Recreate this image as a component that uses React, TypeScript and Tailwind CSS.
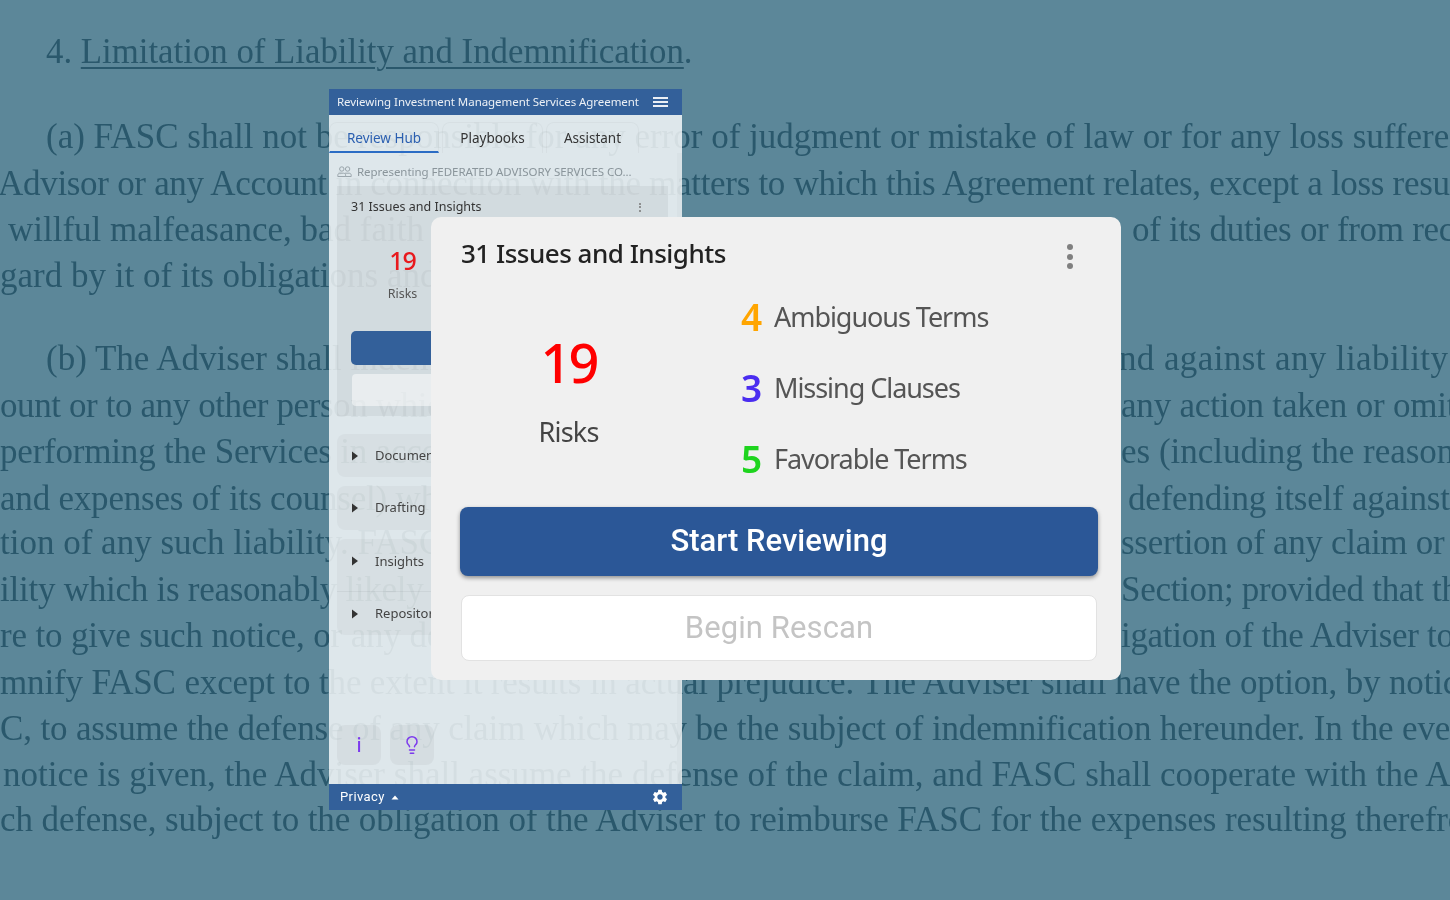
import { Lightbulb } from "lucide-react";
import { MdSettings } from "react-icons/md";

const Caret = () => (
  <svg width="8" height="10" viewBox="0 0 8 10" className="shrink-0 fill-[#333]">
    <path d="M1 0.5 L7 5 L1 9.5 Z" />
  </svg>
);

const People = () => (
  <svg width="15" height="12" viewBox="0 0 15 12" fill="none" className="shrink-0 stroke-[#9aa5ab]">
    <circle cx="4.8" cy="3" r="2.2" />
    <circle cx="10.6" cy="3" r="2.2" />
    <path d="M0.8 10.5v-1.3c0-1.2 1-2 2-2h3.8c1.1 0 2 .8 2 2v1.3z" />
    <path d="M8 7.2h4.2c1.1 0 2 .8 2 2v1.3h-5.8" />
  </svg>
);

const Kebab = ({ big }: { big?: boolean }) =>
  big ? (
    <div className="flex flex-col gap-[3.5px]">
      <span className="size-[6px] rounded-full bg-[#808080]" />
      <span className="size-[6px] rounded-full bg-[#808080]" />
      <span className="size-[6px] rounded-full bg-[#808080]" />
    </div>
  ) : (
    <div className="flex flex-col gap-[1.5px]">
      <span className="size-[2px] rounded-full bg-[#777]" />
      <span className="size-[2px] rounded-full bg-[#777]" />
      <span className="size-[2px] rounded-full bg-[#777]" />
    </div>
  );

const Document = () => (
  <div className="h-full overflow-hidden bg-[#5c8799] pt-[29px] font-['Liberation_Serif',serif] text-[35px] leading-[46.3px] whitespace-nowrap text-[#2a586c]">
    <div className="ml-[46px] h-[46px] text-[34.8px]">
      4. <span className="underline decoration-[2px] underline-offset-[4px]">Limitation of Liability and Indemnification</span>.
    </div>
    <div className="ml-[46px] mt-[39px] h-[46.3px]">(a) FASC shall not be responsible for any error of judgment or mistake of law or for any loss suffered</div>
    <div className="ml-[-2px] h-[46.3px] pt-px tracking-[-0.3px]">Advisor or any Account in connection with the matters to which this Agreement relates, except a loss resulting</div>
    <div className="flex h-[46.3px]">
      <span className="ml-[8px] w-[692px] shrink-0">willful malfeasance, bad faith or gross</span>
      <span className="ml-[432px] shrink-0 tracking-[-0.3px]">of its duties or from reckless</span>
    </div>
    <div className="h-[46.3px]">gard by it of its obligations and duties</div>
    <div className="mt-[37px] flex h-[46.3px]">
      <span className="ml-[46px] w-[654px] shrink-0">(b) The Adviser shall indemnify and</span>
      <span className="ml-[403px] shrink-0 tracking-[0.4px]">and against any liability</span>
    </div>
    <div className="flex h-[46.3px] pt-px">
      <span className="w-[700px] shrink-0 tracking-[-0.4px]">ount or to any other person which</span>
      <span className="ml-[421px] shrink-0 tracking-[-0.2px]">any action taken or omitted</span>
    </div>
    <div className="flex h-[46.3px]">
      <span className="w-[700px] shrink-0 tracking-[-0.2px]">performing the Services in accordance</span>
      <span className="ml-[421px] shrink-0">es (including the reasonable</span>
    </div>
    <div className="flex h-[45.3px] pt-px">
      <span className="w-[700px] shrink-0 tracking-[-0.2px]">and expenses of its counsel) which</span>
      <span className="ml-[428px] shrink-0 tracking-[-0.2px]">defending itself against</span>
    </div>
    <div className="flex h-[45.3px]">
      <span className="w-[700px] shrink-0">tion of any such liability. FASC shall</span>
      <span className="ml-[421px] shrink-0 tracking-[-0.3px]">ssertion of any claim or</span>
    </div>
    <div className="flex h-[46.3px] pt-px">
      <span className="w-[700px] shrink-0 tracking-[-0.25px]">ility which is reasonably likely to</span>
      <span className="ml-[421px] shrink-0 tracking-[-0.3px]">Section; provided that the</span>
    </div>
    <div className="flex h-[46.3px] pt-px">
      <span className="w-[700px] shrink-0 tracking-[-0.15px]">re to give such notice, or any delay</span>
      <span className="ml-[421px] shrink-0 tracking-[-0.3px]">igation of the Adviser to</span>
    </div>
    <div className="h-[46.3px] pt-[2px] tracking-[-0.15px]">mnify FASC except to the extent it results in actual prejudice. The Adviser shall have the option, by notice</div>
    <div className="h-[46.3px] pt-px tracking-[-0.15px]">C, to assume the defense of any claim which may be the subject of indemnification hereunder. In the event</div>
    <div className="ml-[3px] h-[46.3px] pt-px">notice is given, the Adviser shall assume the defense of the claim, and FASC shall cooperate with the Adviser</div>
    <div className="h-[46.3px] tracking-[-0.1px]">ch defense, subject to the obligation of the Adviser to reimburse FASC for the expenses resulting therefrom</div>
  </div>
);

const Panel = () => (
  <div className="absolute left-[329px] top-[89px] flex h-[721px] w-[353px] flex-col bg-white/80 font-['Noto_Sans',sans-serif]">
    <div className="flex h-[26px] shrink-0 items-center justify-between bg-[#33609a] pl-[8px] pr-[14px] text-[11.5px] tracking-[-0.06px] text-white/90">
      <span>Reviewing Investment Management Services Agreement</span>
      <div className="flex flex-col gap-[2.5px]">
        <span className="h-[1.5px] w-[15px] bg-white/90" />
        <span className="h-[1.5px] w-[15px] bg-white/90" />
        <span className="h-[1.5px] w-[15px] bg-white/90" />
      </div>
    </div>
    <div className="flex h-[38px] shrink-0 items-end gap-[3px] text-[13.5px] text-[#333]">
      <div className="flex h-[31px] w-[110px] items-center justify-center rounded-t-lg border border-b-2 border-black/[0.03] border-b-[#2b6cc4] pt-[3px] text-[#2b5fb0]">Review Hub</div>
      <div className="flex h-[31px] w-[101px] items-center justify-center rounded-t-lg border border-b-0 border-black/[0.03] pt-px">Playbooks</div>
      <div className="flex h-[31px] w-[93px] items-center justify-center rounded-t-lg border border-b-0 border-black/[0.03] pt-px">Assistant</div>
    </div>
    <div className="relative flex flex-1 flex-col px-[8px]">
      <div className="absolute inset-y-0 right-0 w-[5px] bg-black/[0.02]" />
      <div className="flex h-[33px] shrink-0 items-center gap-[5px] pt-[4px] text-[11.5px] tracking-[-0.05px] text-[#8a959b]">
        <People />
        <span>Representing FEDERATED ADVISORY SERVICES CO...</span>
      </div>
      <div className="flex h-[230px] w-[331px] shrink-0 flex-col bg-black/5 px-[14px]">
        <div className="flex h-[41px] shrink-0 items-center justify-between pr-[13px] pt-px text-[12.5px] text-[#333]">
          <span>31 Issues and Insights</span>
          <Kebab />
        </div>
        <div className="flex w-[103px] flex-col items-center pt-[16px]">
          <span className="text-[25px] leading-[34px] font-medium tracking-[-1px] text-[#e8191d]">19</span>
          <span className="mt-[8px] text-[12.5px] text-[#555]">Risks</span>
        </div>
        <div className="mt-auto mb-[10px] flex flex-col gap-[9px]">
          <div className="h-[34px] rounded-[5px] bg-[#33609a]" />
          <div className="ml-px h-[32px] rounded-[4px] bg-white/50" />
        </div>
      </div>
      <div className="mt-[18px] flex flex-col">
        <div className="flex h-[43px] items-center gap-[16px] rounded-lg bg-black/[0.03] pl-[14px] text-[13px] text-[#444]">
          <Caret />
          Documents
        </div>
        <div className="mt-[9px] flex h-[44px] items-center gap-[16px] rounded-lg bg-black/[0.03] pl-[14px] text-[13px] text-[#444]">
          <Caret />
          Drafting
        </div>
        <div className="mt-[9px] flex h-[53px] items-start gap-[16px] rounded-t-lg border-b border-black/5 bg-black/[0.03] pl-[14px] pt-[13px] text-[13px] text-[#444]">
          <span className="mt-[4px]">
            <Caret />
          </span>
          Insights
        </div>
        <div className="flex h-[43px] items-center gap-[16px] rounded-b-lg bg-black/[0.03] pl-[14px] text-[13px] text-[#444]">
          <Caret />
          Repository
        </div>
      </div>
      <div className="mt-auto mb-[19px] flex gap-[9px]">
        <div className="flex h-[40px] w-[44px] items-center justify-center rounded-lg bg-black/[0.04] text-[19px] font-medium text-[#7c3aed]">i</div>
        <div className="flex h-[40px] w-[44px] items-center justify-center rounded-lg bg-black/[0.04] text-[#7c3aed]">
          <Lightbulb size={20} strokeWidth={1.8} />
        </div>
      </div>
    </div>
    <div className="flex h-[26px] shrink-0 items-center justify-between bg-[#33609a] pl-[11px] pr-[13px] font-['Roboto',sans-serif] text-[13px] tracking-[0.4px] text-white">
      <div className="flex items-center gap-[6px]">
        Privacy
        <svg width="8" height="5" viewBox="0 0 8 5" className="fill-white">
          <path d="M4 0.5 L7.5 4.5 L0.5 4.5 Z" />
        </svg>
      </div>
      <MdSettings size={18} />
    </div>
  </div>
);

const stats = [
  { n: "4", label: "Ambiguous Terms", color: "text-[#ffa500]" },
  { n: "3", label: "Missing Clauses", color: "text-[#4a2df0]" },
  { n: "5", label: "Favorable Terms", color: "text-[#1ed41e]" },
];

const Modal = () => (
  <div className="absolute left-[431px] top-[217px] flex h-[463px] w-[690px] flex-col rounded-[10px] bg-[#f0f0f0] px-[29px] font-['Noto_Sans',sans-serif]">
    <div className="flex h-[72px] shrink-0 items-center justify-between pl-px pr-[19px]">
      <span className="text-[26px] font-medium tracking-[-0.5px] text-[#222]">31 Issues and Insights</span>
      <span className="mt-[7px]">
        <Kebab big />
      </span>
    </div>
    <div className="flex h-[218px] shrink-0">
      <div className="flex w-[217px] flex-col items-center pt-[38px]">
        <span className="text-[54px] leading-[70px] font-medium tracking-[-3px] text-[#ff0000]">19</span>
        <span className="mt-[15px] text-[27px] tracking-[-0.8px] text-[#444]">Risks</span>
      </div>
      <div className="ml-[64px] flex flex-col gap-[25px] pt-[5px]">
        {stats.map((s) => (
          <div key={s.n} className="flex h-[46px] items-center gap-[11px]">
            <span className={`w-[22px] text-[37px] font-semibold tracking-[-1px] ${s.color}`}>{s.n}</span>
            <span className="text-[27px] tracking-[-1.05px] text-[#555]">{s.label}</span>
          </div>
        ))}
      </div>
    </div>
    <button className="h-[69px] w-[638px] shrink-0 rounded-[8px] bg-[#2b5797] font-['Roboto',sans-serif] text-[31px] font-medium text-white shadow-[0_2px_4px_rgba(0,0,0,0.4)]">
      Start Reviewing
    </button>
    <button className="mt-[19px] ml-px h-[66px] w-[636px] shrink-0 rounded-[8px] border border-[#e2e2e2] bg-white font-['Roboto',sans-serif] text-[31px] tracking-[0.1px] text-[#c4c4c4]">
      Begin Rescan
    </button>
  </div>
);

export default function App() {
  return (
    <div className="relative h-[900px] w-[1450px] overflow-hidden blur-[0.35px]">
      <Document />
      <Panel />
      <Modal />
    </div>
  );
}
